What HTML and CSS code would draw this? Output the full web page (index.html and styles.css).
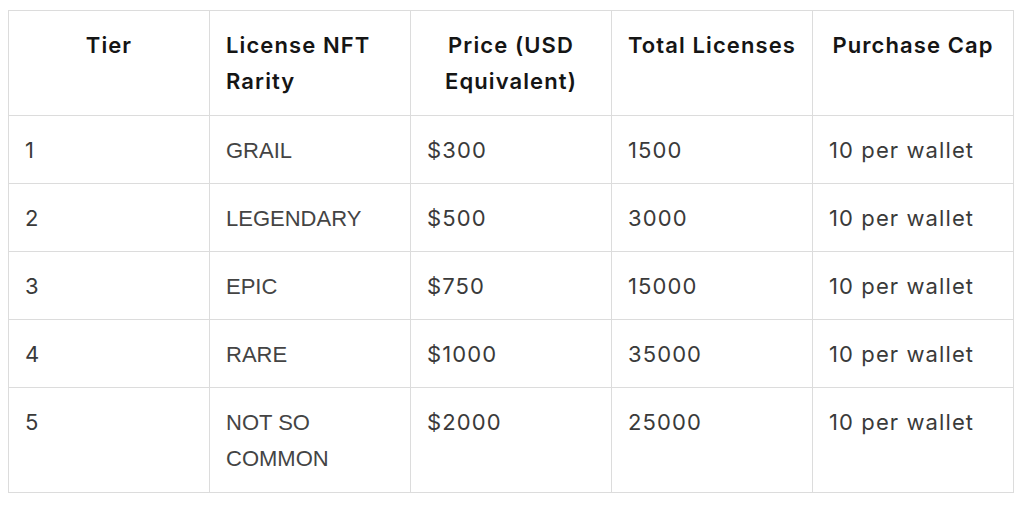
FILE: index.html
```html
<!DOCTYPE html>
<html>
<head>
<meta charset="utf-8">
<link rel="stylesheet" href="styles.css">
</head>
<body>
<table class="tiers">
  <colgroup><col><col><col><col><col></colgroup>
  <thead>
    <tr>
      <th>Tier</th>
      <th class="h-left">License NFT<br>Rarity</th>
      <th>Price (USD<br>Equivalent)</th>
      <th>Total Licenses</th>
      <th>Purchase Cap</th>
    </tr>
  </thead>
  <tbody>
    <tr><td>1</td><td class="rarity">GRAIL</td><td>$300</td><td>1500</td><td>10 per wallet</td></tr>
    <tr><td>2</td><td class="rarity">LEGENDARY</td><td>$500</td><td>3000</td><td>10 per wallet</td></tr>
    <tr><td>3</td><td class="rarity">EPIC</td><td>$750</td><td>15000</td><td>10 per wallet</td></tr>
    <tr><td>4</td><td class="rarity">RARE</td><td>$1000</td><td>35000</td><td>10 per wallet</td></tr>
    <tr class="tall"><td>5</td><td class="rarity">NOT SO<br>COMMON</td><td>$2000</td><td>25000</td><td>10 per wallet</td></tr>
  </tbody>
</table>
</body>
</html>
```
FILE: styles.css
```css
html, body {
  margin: 0;
  padding: 0;
  background: #ffffff;
}
body {
  padding: 10px 8px;
  font-family: Inter, "Liberation Sans", sans-serif;
}
.tiers {
  border-collapse: collapse;
  table-layout: fixed;
  width: 1006px;
}
.tiers col {
  width: 201px;
}
.tiers th,
.tiers td {
  border: 1px solid #dcdcdc;
  padding: 16px 14px 15px 16px;
  line-height: 36px;
  font-size: 22px;
  letter-spacing: 1.1px;
  vertical-align: top;
  text-align: left;
  white-space: nowrap;
}
.tiers th {
  font-weight: 600;
  color: #151515;
  text-align: center;
  padding-left: 14px;
  padding-bottom: 16px;
}
.tiers th.h-left {
  text-align: left;
  padding-left: 16px;
}
.tiers td {
  font-weight: 400;
  color: #3a3a3a;
}
.tiers tr.tall td {
  padding-bottom: 16px;
}
.tiers td.rarity {
  font-family: "Liberation Sans", Arial, sans-serif;
  letter-spacing: 0;
  color: #444444;
  padding-top: 17px;
  padding-bottom: 14px;
}
.tiers tr.tall td.rarity {
  padding-bottom: 15px;
}
```
